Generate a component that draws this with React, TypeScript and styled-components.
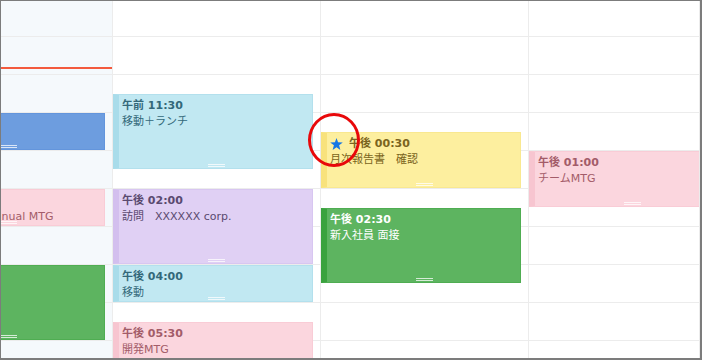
import React from 'react'
import styled, { createGlobalStyle } from 'styled-components'

const GlobalStyle = createGlobalStyle`
  body {
    margin: 0;
    background: #fff;
    font-family: 'DejaVu Sans', 'Noto Sans CJK JP', sans-serif;
  }
`

const HOUR = 38
const BASE_HOUR = 11
const BASE_TOP = 74

type Tone = 'cyan' | 'purple' | 'yellow' | 'pink' | 'green' | 'blue'

const tones: Record<Tone, { bg: string; stripe: string; border: string; text: string }> = {
  cyan: { bg: '#c1e8f2', stripe: '#a9dcea', border: '#b3e0ed', text: '#33687a' },
  purple: { bg: '#e0d0f4', stripe: '#d3bfee', border: '#d8c6f1', text: '#5a4a70' },
  yellow: { bg: '#fdef9f', stripe: '#f8e27c', border: '#f9e890', text: '#7a6420' },
  pink: { bg: '#fbd6de', stripe: '#f7c5d0', border: '#f9ccd6', text: '#a35c69' },
  green: { bg: '#5db460', stripe: '#3aa23e', border: '#4fad52', text: '#ffffff' },
  blue: { bg: '#6d9ddf', stripe: '#5c8fd8', border: '#6395dc', text: '#ffffff' },
}

interface CalEvent {
  start: number
  dur: number
  tone: Tone
  time?: string
  title?: string
  star?: boolean
  clipped?: boolean
}

// first column is scrolled, so its events run off the left edge
const columns: { today?: boolean; events: CalEvent[] }[] = [
  {
    today: true,
    events: [
      { start: 12, dur: 1, tone: 'blue', clipped: true },
      { start: 14, dur: 1, tone: 'pink', title: 'Annual MTG', clipped: true },
      { start: 16, dur: 2, tone: 'green', clipped: true },
    ],
  },
  {
    events: [
      { start: 11.5, dur: 2, tone: 'cyan', time: '午前 11:30', title: '移動＋ランチ' },
      { start: 14, dur: 2, tone: 'purple', time: '午後 02:00', title: '訪問　XXXXXX corp.' },
      { start: 16, dur: 1, tone: 'cyan', time: '午後 04:00', title: '移動' },
      { start: 17.5, dur: 1.5, tone: 'pink', time: '午後 05:30', title: '開発MTG' },
    ],
  },
  {
    events: [
      { start: 12.5, dur: 1.5, tone: 'yellow', time: '午後 00:30', title: '月次報告書　確認', star: true },
      { start: 14.5, dur: 2, tone: 'green', time: '午後 02:30', title: '新入社員 面接' },
    ],
  },
  {
    events: [{ start: 13, dur: 1.5, tone: 'pink', time: '午後 01:00', title: 'チームMTG' }],
  },
]

const Frame = styled.div`
  position: relative;
  box-sizing: border-box;
  width: 702px;
  height: 360px;
  border: 1px solid #7c7c7c;
  border-right-width: 2px;
  border-bottom-width: 2px;
  overflow: hidden;
  display: grid;
  grid-template-columns: 112px 208px 208px 1fr;
`

const DayColumn = styled.div<{ $today?: boolean }>`
  position: relative;
  box-sizing: border-box;
  border-right: 1px solid #ececec;
  background: ${({ $today }) => ($today ? '#f5f9fc' : '#fff')};
  overflow: hidden;
`

const Slots = styled.div`
  display: flex;
  flex-direction: column;
  margin-top: -2px;
`

const Slot = styled.div`
  box-sizing: border-box;
  height: ${HOUR}px;
  flex: none;
  border-bottom: 1px solid #ececec;
`

const NowLine = styled.div`
  position: absolute;
  left: 0;
  right: 0;
  top: 66px;
  height: 2px;
  background: #f35a3d;
`

const EventBox = styled.div<{ $tone: Tone; $clipped?: boolean }>`
  position: absolute;
  box-sizing: border-box;
  width: 200px;
  ${({ $clipped }) => ($clipped ? 'right: 7px;' : 'left: 0;')}
  padding: 3px 4px 0 3px;
  background: ${({ $tone }) => tones[$tone].bg};
  border: 1px solid ${({ $tone }) => tones[$tone].border};
  border-left: 6px solid ${({ $tone }) => tones[$tone].stripe};
  color: ${({ $tone }) => tones[$tone].text};
  font-size: 11px;
  line-height: 16px;
  white-space: nowrap;
  overflow: hidden;
`

const Time = styled.div`
  display: flex;
  align-items: center;
  gap: 6px;
  height: 16px;
  font-weight: bold;
`

const Title = styled.div<{ $shift?: number }>`
  margin-left: ${({ $shift }) => $shift || 0}px;
`

const Grip = styled.div`
  position: absolute;
  left: 50%;
  bottom: 1px;
  width: 17px;
  height: 1px;
  margin-left: -8px;
  border-top: 1px solid rgba(255, 255, 255, 0.75);
  border-bottom: 1px solid rgba(255, 255, 255, 0.75);
`

const Marker = styled.div`
  position: absolute;
  left: 307px;
  top: 112px;
  width: 52px;
  height: 54px;
  box-sizing: border-box;
  border: 3px solid #e8080a;
  border-radius: 50%;
  pointer-events: none;
`

const StarIcon = () => (
  <svg width="13" height="12" viewBox="0 0 24 23">
    <polygon
      fill="#1677e5"
      points="12,0 15,8.3 24,8.6 17,14.1 19.4,23 12,17.8 4.6,23 7,14.1 0,8.6 9,8.3"
    />
  </svg>
)

const App: React.FC = () => {
  return (
    <>
      <GlobalStyle />
      <Frame>
        {columns.map((col, ci) => (
          <DayColumn key={ci} $today={col.today}>
            <Slots>
              {Array.from({ length: 10 }).map((_, i) => (
                <Slot key={i} />
              ))}
            </Slots>
            {col.today && <NowLine />}
            {col.events.map((ev, ei) => (
              <EventBox
                key={ei}
                $tone={ev.tone}
                $clipped={ev.clipped}
                style={{
                  top: BASE_TOP + (ev.start - BASE_HOUR) * HOUR,
                  height: ev.dur * HOUR - 1,
                }}
              >
                <Time>
                  {ev.star && <StarIcon />}
                  {ev.time}
                </Time>
                {ev.title && <Title $shift={ev.clipped ? 73 : 0}>{ev.title}</Title>}
                <Grip />
              </EventBox>
            ))}
          </DayColumn>
        ))}
        <Marker />
      </Frame>
    </>
  )
}

export default App
